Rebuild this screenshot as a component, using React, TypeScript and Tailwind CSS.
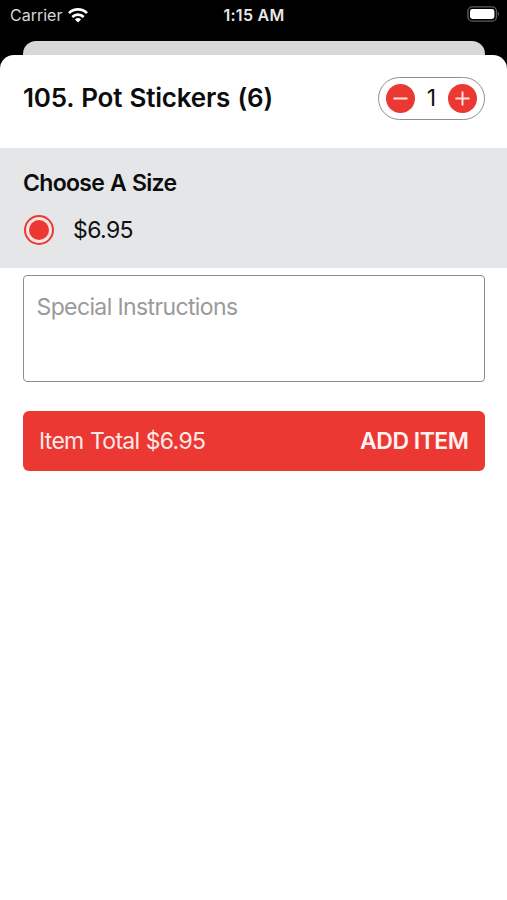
import { useState } from 'react';

const PRICE = 6.95;

function StatusBar() {
  return (
    <div className="grid h-[30px] grid-cols-3 items-center pl-[10px] pr-[7px] text-white">
      <div className="flex items-center gap-[6px]">
        <span className="text-[16px] leading-none text-[#d6d6d6]">Carrier</span>
        <svg width="20" height="15" viewBox="0 0 20 15" fill="none" stroke="currentColor" strokeWidth="2.7">
          <path d="M1 5.1a12.9 12.9 0 0 1 18 0" />
          <path d="M4.3 9a8.2 8.2 0 0 1 11.4 0" />
          <path d="M10 14.6 6.9 11.4a4.5 4.5 0 0 1 6.2 0Z" fill="currentColor" stroke="none" />
        </svg>
      </div>
      <span className="pr-[2px] text-center text-[16px] leading-none font-semibold tracking-[0.3px] text-[#e8e8e8]">
        1:15 AM
      </span>
      <svg className="-mt-[2px] justify-self-end" width="33" height="16" viewBox="0 0 33 16">
        <rect x="0.9" y="0.9" width="28.6" height="14.2" rx="4.4" fill="none" stroke="#5c5c5c" strokeWidth="1.4" />
        <rect x="3" y="3" width="24.4" height="10" rx="2.4" fill="#fff" />
        <path d="M31 5.8c1.3.5 1.3 3.9 0 4.4Z" fill="#5c5c5c" />
      </svg>
    </div>
  );
}

interface StepperProps {
  value: number;
  onChange: (value: number) => void;
}

function Stepper({ value, onChange }: StepperProps) {
  return (
    <div className="flex h-[43px] w-[107px] items-center justify-between rounded-full border-[1.5px] border-[#8f8f8f] px-[6.5px]">
      <button
        aria-label="Decrease"
        className="flex size-[29px] items-center justify-center rounded-full bg-[#eb3832]"
        onClick={() => onChange(Math.max(1, value - 1))}
      >
        <svg width="15" height="15" viewBox="0 0 15 15" stroke="#ffe4e2" strokeWidth="1.9" strokeLinecap="round">
          <path d="M1.2 7.5h12.6" />
        </svg>
      </button>
      <span className="text-[23px] leading-none text-[#111]">{value}</span>
      <button
        aria-label="Increase"
        className="flex size-[29px] items-center justify-center rounded-full bg-[#eb3832]"
        onClick={() => onChange(value + 1)}
      >
        <svg width="15" height="15" viewBox="0 0 15 15" stroke="#ffe4e2" strokeWidth="1.9" strokeLinecap="round">
          <path d="M1.2 7.5h12.6M7.5 1.2v12.6" />
        </svg>
      </button>
    </div>
  );
}

export default function App() {
  const [quantity, setQuantity] = useState(1);

  return (
    <div className="flex h-[900px] w-[507px] flex-col overflow-hidden bg-black font-['Inter',sans-serif]">
      <StatusBar />

      {/* Edge of the page behind the sheet */}
      <div className="mx-[22.5px] mt-[11px] h-[14px] shrink-0 rounded-t-[13px] bg-[#d8d8d8]" />

      <main className="flex-1 rounded-t-[14px] bg-white">
        <header className="flex h-[93px] items-center justify-between pr-[22px] pb-[7px] pl-[23px]">
          <h1 className="text-[26px] leading-none font-semibold tracking-[-0.2px] text-[#0c0c0c] [word-spacing:1px]">
            105. Pot Stickers (6)
          </h1>
          <Stepper value={quantity} onChange={setQuantity} />
        </header>

        <section className="h-[120px] bg-[#e4e6e7] px-[23px] pt-[23px]">
          <h2 className="text-[23px] leading-[24px] font-semibold tracking-[-0.7px] text-[#0c0c0c] [word-spacing:0.8px]">
            Choose A Size
          </h2>
          <label className="mt-[20px] flex items-center gap-[19px]">
            <span className="ml-[1px] flex size-[30px] items-center justify-center rounded-full border-2 border-[#eb3832] bg-[#f6e3e3]">
              <span className="size-[20px] rounded-full bg-[#eb3832]" />
            </span>
            <span className="text-[23px] leading-[30px] tracking-[-0.6px] text-[#111]">${PRICE.toFixed(2)}</span>
          </label>
        </section>

        <div className="pt-[7px] pr-[22px] pl-[22.5px]">
          <textarea
            placeholder="Special Instructions"
            className="block h-[107px] w-full resize-none rounded-[4px] border-[1.5px] border-[#8f8f8f] px-[13px] pt-[17px] text-[23px] leading-[28px] tracking-[-0.62px] outline-none placeholder:text-[#9a9a9a]"
          />
          <button className="mt-[29px] flex h-[60px] w-full items-center justify-between rounded-[6px] bg-[#eb3832] px-[16.5px] text-[23px] leading-none">
            <span className="tracking-[-0.7px] text-[#ffe9e7] [word-spacing:0.6px]">
              Item Total ${(PRICE * quantity).toFixed(2)}
            </span>
            <span className="font-semibold tracking-[-0.5px] text-[#fff3f2]">ADD ITEM</span>
          </button>
        </div>
      </main>
    </div>
  );
}
